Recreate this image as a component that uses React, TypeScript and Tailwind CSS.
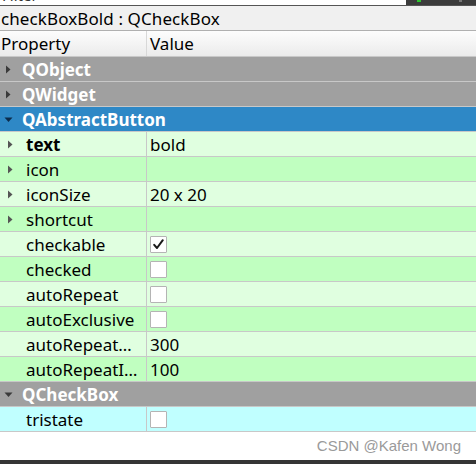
import React from "react";

type Row =
  | { kind: "cat"; name: string; open: boolean; blue?: boolean }
  | {
      kind: "prop";
      name: string;
      value?: string;
      check?: boolean | null;
      bold?: boolean;
      arrow?: boolean;
      bg: string;
    };

const L = "bg-[#e0ffe0]";
const D = "bg-[#c0ffc0]";
const C = "bg-[#c0ffff]";

const rows: Row[] = [
  { kind: "cat", name: "QObject", open: false },
  { kind: "cat", name: "QWidget", open: false },
  { kind: "cat", name: "QAbstractButton", open: true, blue: true },
  { kind: "prop", name: "text", value: "bold", bold: true, arrow: true, bg: L },
  { kind: "prop", name: "icon", arrow: true, bg: D },
  { kind: "prop", name: "iconSize", value: "20 x 20", arrow: true, bg: L },
  { kind: "prop", name: "shortcut", arrow: true, bg: D },
  { kind: "prop", name: "checkable", check: true, bg: L },
  { kind: "prop", name: "checked", check: false, bg: D },
  { kind: "prop", name: "autoRepeat", check: false, bg: L },
  { kind: "prop", name: "autoExclusive", check: false, bg: D },
  { kind: "prop", name: "autoRepeat…", value: "300", bg: L },
  { kind: "prop", name: "autoRepeatI…", value: "100", bg: D },
  { kind: "cat", name: "QCheckBox", open: true },
  { kind: "prop", name: "tristate", check: false, bg: C },
];

function Tri({ open, color }: { open: boolean; color: string }) {
  return open ? (
    <svg width="9" height="9" viewBox="0 0 9 9" className="shrink-0">
      <path d="M0.5 2.5 L8.5 2.5 L4.5 7 Z" fill={color} />
    </svg>
  ) : (
    <svg width="9" height="9" viewBox="0 0 9 9" className="shrink-0">
      <path d="M2 0.5 L6.5 4.5 L2 8.5 Z" fill={color} />
    </svg>
  );
}

function Check({ checked }: { checked: boolean }) {
  return (
    <div className="w-[17px] h-[17px] bg-white border border-[#b4b4b4] rounded-[1px] flex items-center justify-center">
      {checked && (
        <svg width="13" height="13" viewBox="0 0 13 13">
          <path
            d="M2.2 6.8 L5 10 L10.8 2.2"
            fill="none"
            stroke="#1a1a1a"
            strokeWidth="2"
            strokeLinecap="round"
            strokeLinejoin="round"
          />
        </svg>
      )}
    </div>
  );
}

export default function App() {
  return (
    <div
      className="w-[476px] h-[464px] bg-white flex flex-col overflow-hidden text-black"
      style={{ fontFamily: '"Noto Sans", "Open Sans", sans-serif' }}
    >
      {/* top cut strip */}
      <div className="h-[5px] flex shrink-0 overflow-hidden">
        <div className="flex-1 bg-white relative overflow-hidden">
          <span className="absolute left-[2px] top-[-14px] text-[15px] leading-[18px] text-[#333]">
            Filter
          </span>
        </div>
        <div className="w-[70px] bg-[#3c3c3c] relative">
          <div className="absolute left-[11px] top-0 w-[4px] h-[2px] bg-[#2ec62e]" />
          <div className="absolute left-[53px] top-0 w-[3px] h-[2px] bg-[#777]" />
        </div>
      </div>
      <div className="h-[1px] bg-[#555] shrink-0" />
      {/* object title */}
      <div className="h-[25px] bg-[#f0f0f0] flex items-center pl-[1px] text-[17px] shrink-0 border-b border-[#b0b0b0]">
        <span className="leading-none tracking-[0.1px]">checkBoxBold : QCheckBox</span>
      </div>
      {/* header */}
      <div className="h-[26px] flex shrink-0 border-b border-[#c8c8c8] bg-gradient-to-b from-[#fdfdfd] to-[#ebebeb] text-[17px]">
        <div className="w-[147px] border-r border-[#d8d8d8] flex items-center pl-[1px]">
          Property
        </div>
        <div className="flex-1 flex items-center pl-[3px]">Value</div>
      </div>
      {rows.map((r, i) =>
        r.kind === "cat" ? (
          <div
            key={i}
            className={`h-[25px] shrink-0 flex items-center border-b ${
              r.blue
                ? "bg-[#2e88c6] border-[#c8c8c8]"
                : "bg-[#a0a0a0] border-[#c8c8c8]"
            }`}
          >
            <div className="w-[22px] flex justify-start pl-[4px]">
              <Tri open={r.open} color={r.blue ? "#0c2c4c" : "#3a3a3a"} />
            </div>
            <span className="text-white font-bold text-[17px] leading-none">
              {r.name}
            </span>
          </div>
        ) : (
          <div
            key={i}
            className={`h-[25px] shrink-0 flex border-b border-[#c8c8c8] ${r.bg}`}
          >
            <div className="w-[147px] border-r border-[#c8c8c8] flex items-center">
              <div className="w-[26px] flex justify-start pl-[6px]">
                {r.arrow && <Tri open={false} color="#555" />}
              </div>
              <span
                className={`text-[17px] leading-none whitespace-nowrap ${
                  r.bold ? "font-bold" : ""
                }`}
              >
                {r.name}
              </span>
            </div>
            <div className="flex-1 flex items-center pl-[3px] text-[17px] leading-none">
              {r.check !== undefined && r.check !== null ? (
                <Check checked={r.check} />
              ) : (
                r.value
              )}
            </div>
          </div>
        )
      )}
      <div className="flex-1 relative bg-white">
        <span
          className="absolute right-[15px] top-[3px] text-[15px] text-[#9a9a9a]"
          style={{ fontFamily: '"Liberation Sans", Arial, sans-serif' }}
        >
          CSDN @Kafen Wong
        </span>
      </div>
      <div className="h-[4px] bg-[#353535] shrink-0" />
    </div>
  );
}
